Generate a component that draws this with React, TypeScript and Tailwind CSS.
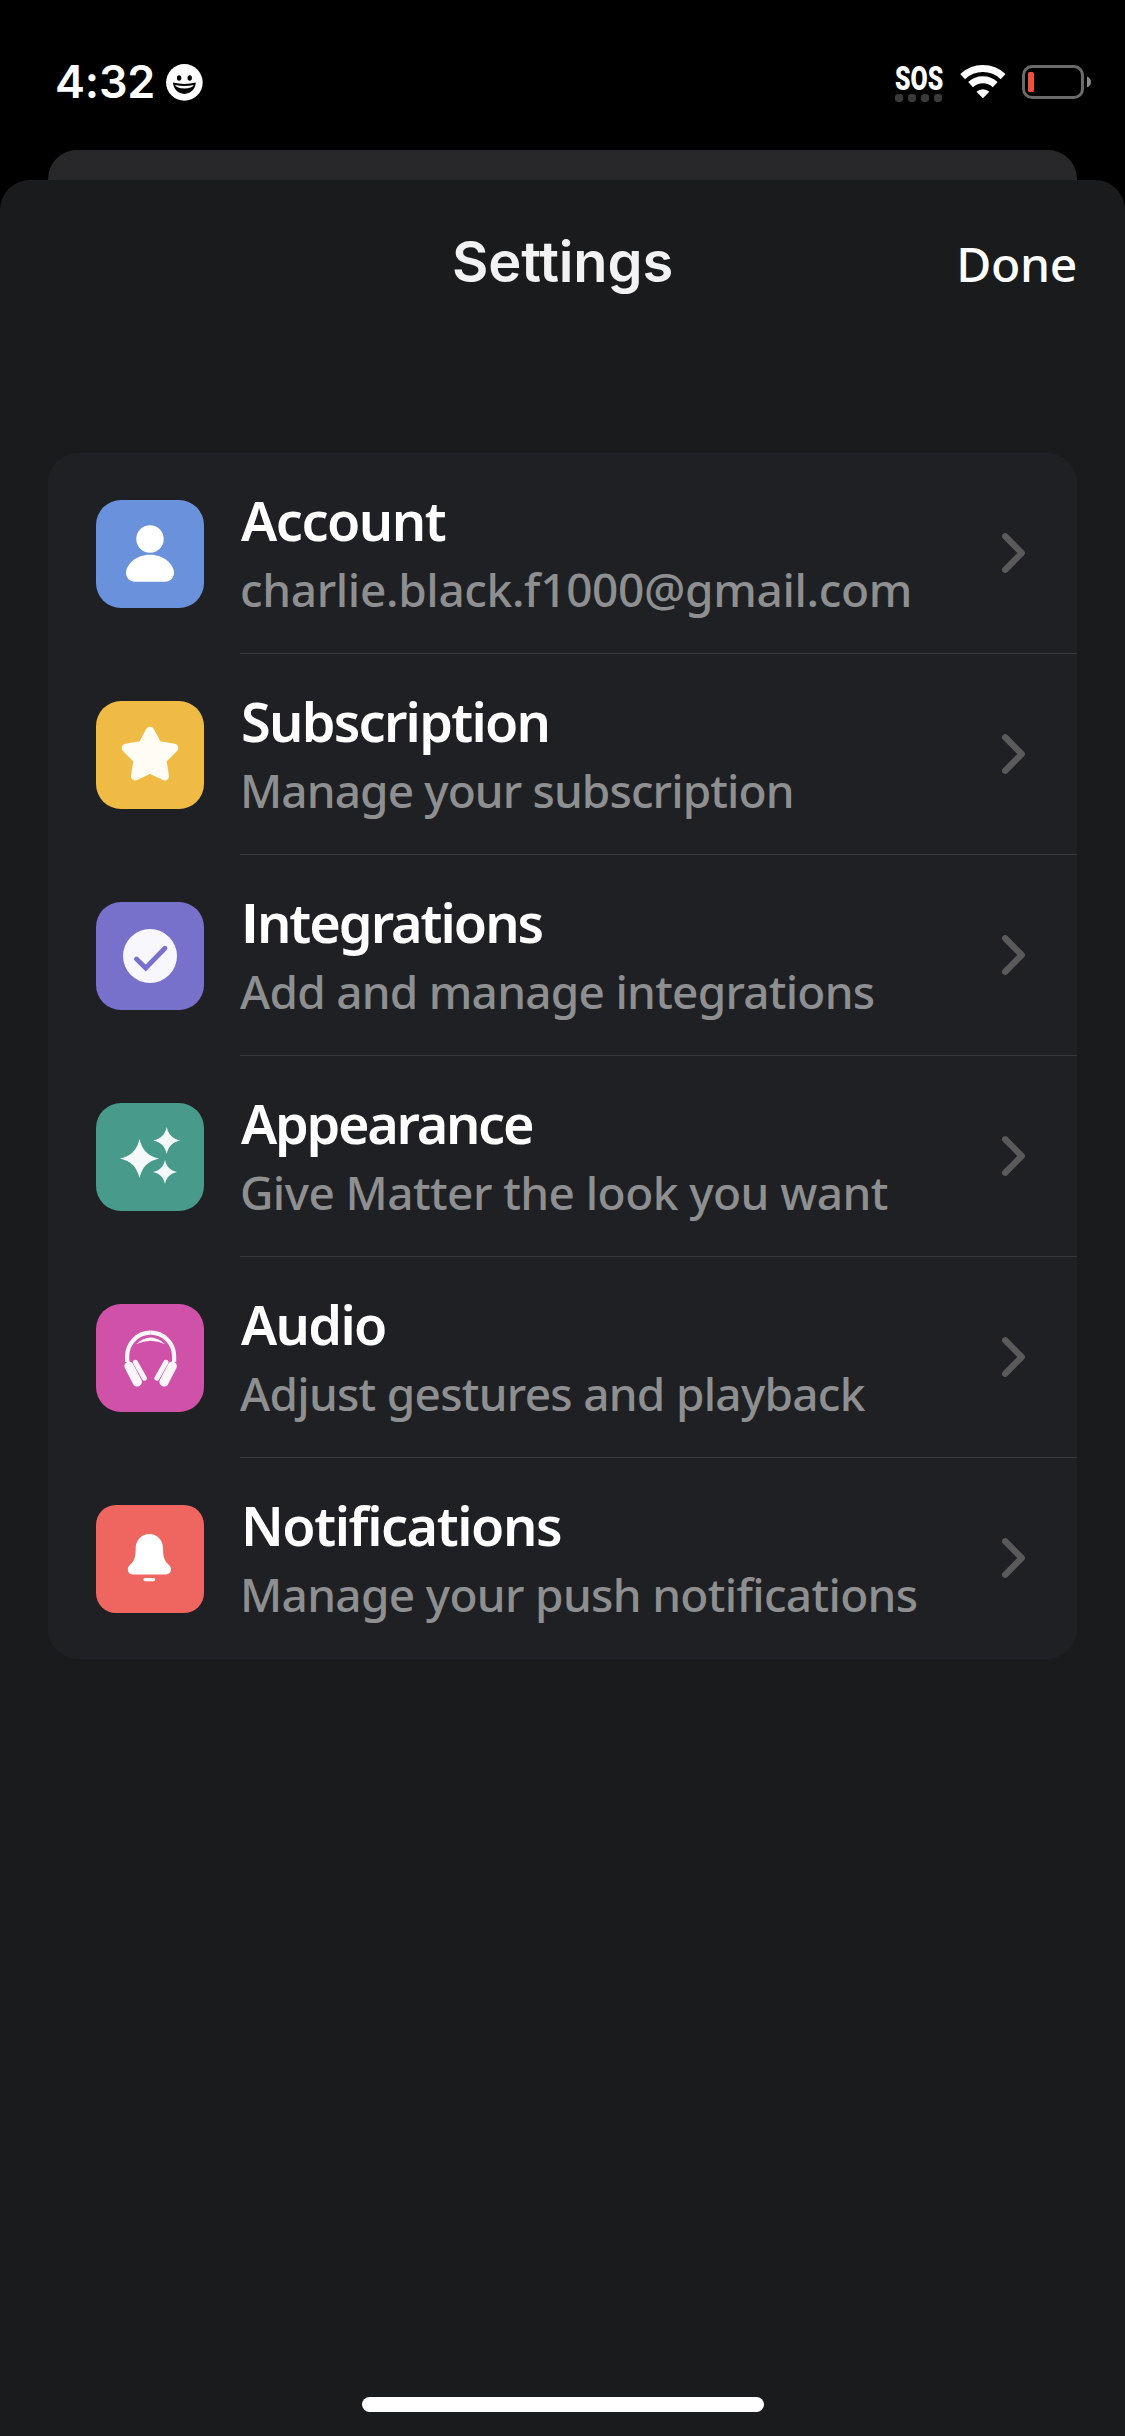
import React from 'react'

type Row = {
  title: string
  subtitle: string
  titleClass: string
  subtitleClass: string
  tile: string
  icon: React.ReactNode
}

const SPARKLE = 'M0 -1C.14 -.42 .42 -.14 1 0C.42 .14 .14 .42 0 1C-.14 .42 -.42 .14 -1 0C-.42 -.14 -.14 -.42 0 -1Z'

const EarCup = () => (
  <g stroke="#fcf5fa" strokeLinecap="round">
    <path d="M31.2 58V52A23.4 23.4 0 0 1 54.7 28.7" fill="none" strokeWidth="4.2" strokeLinecap="butt" />
    <path d="M33 62.2L41.3 78" strokeWidth="9.2" />
    <path d="M39.4 58.3L48.4 74.2" strokeWidth="5" />
  </g>
)

const rows: Row[] = [
  {
    title: 'Account',
    subtitle: 'charlie.black.f1000@gmail.com',
    titleClass: 'tracking-[-1.5px]',
    subtitleClass: 'tracking-[-0.35px]',
    tile: 'bg-[#6a92dc] rounded-[25px]',
    icon: (
      <g fill="#fff">
        <circle cx="54" cy="39" r="13.7" />
        <path d="M30 72.5C30.6 64 40 54.7 54 54.7S77.4 64 78 72.5C78 78 74 81.7 69 81.7H39C34 81.7 30 78 30 72.5Z" />
      </g>
    ),
  },
  {
    title: 'Subscription',
    subtitle: 'Manage your subscription',
    titleClass: 'tracking-[-1.75px]',
    subtitleClass: 'tracking-[-0.9px]',
    tile: 'bg-[#f0bb45] rounded-[25px]',
    icon: (
      <path
        d="M54 30L61.7 44.2L78 47L66.1 58.9L68.7 75.2L54 68.1L39.3 75.2L41.9 58.9L30 47L46.3 44.2Z"
        fill="#fffdf3"
        stroke="#fffdf3"
        strokeWidth="8.6"
        strokeLinejoin="round"
      />
    ),
  },
  {
    title: 'Integrations',
    subtitle: 'Add and manage integrations',
    titleClass: "tracking-[-2px] first-letter:font-['Open_Sans'] first-letter:font-bold",
    subtitleClass: 'tracking-[-0.75px]',
    tile: 'bg-[#7871cb] rounded-[25px]',
    icon: (
      <g>
        <circle cx="54" cy="54" r="27" fill="#f8f7fd" />
        <path d="M40.5 57L49.7 66L69 46.3" fill="none" stroke="#7871cb" strokeWidth="4.8" strokeLinecap="round" />
      </g>
    ),
  },
  {
    title: 'Appearance',
    subtitle: 'Give Matter the look you want',
    titleClass: 'tracking-[-2.3px]',
    subtitleClass: 'tracking-[-0.57px]',
    tile: 'bg-[#489a8a] rounded-[25px]',
    icon: (
      <g fill="#f4faf9">
        <path d={SPARKLE} transform="translate(43.5 55.5) scale(19.6)" />
        <path d={SPARKLE} transform="translate(70.7 37.4) scale(13.5)" />
        <path d={SPARKLE} transform="translate(69 69) scale(12)" />
      </g>
    ),
  },
  {
    title: 'Audio',
    subtitle: 'Adjust gestures and playback',
    titleClass: 'tracking-[-1.7px]',
    subtitleClass: 'tracking-[-0.73px]',
    tile: 'bg-[#d052a8] rounded-[25px]',
    icon: (
      <g>
        <EarCup />
        <g transform="translate(109.3 0) scale(-1 1)">
          <EarCup />
        </g>
        <path d="M40 40.2Q54.7 26.6 69.3 40.2Q54.7 33.2 40 40.2Z" fill="#fcf5fa" />
      </g>
    ),
  },
  {
    title: 'Notifications',
    subtitle: 'Manage your push notifications',
    titleClass: 'tracking-[-1.45px]',
    subtitleClass: 'tracking-[-0.68px]',
    tile: 'bg-[#ee665f] rounded-[20px]',
    icon: (
      <g fill="#fff">
        <path d="M39.7 43C39.7 35 46 29 53.4 29S67 35 67 43C67 52 68.5 56 72.5 59.5C74.2 61 75 62.5 75 64.5C75 67.4 73 69.4 70 69.4H36.7C33.7 69.4 31.8 67.4 31.8 64.5C31.8 62.5 32.6 61 34.3 59.5C38.3 56 39.7 52 39.7 43Z" />
        <rect x="47.4" y="73" width="11.8" height="3.2" rx="1.6" />
      </g>
    ),
  },
]

const StatusBar = () => (
  <div className="flex h-[150px] items-start justify-between pl-[55px] pr-[33px] pt-[62px]">
    <div className="flex items-center">
      <span className="w-[111px] font-[Inter] text-[45px] font-[570] leading-[40px] tracking-[-0.2px] whitespace-nowrap">4:32</span>
      <svg className="h-[37px] w-[37px]" viewBox="0 0 37 37">
        <circle cx="18.4" cy="18.4" r="18.3" fill="#fff" />
        <ellipse cx="13.1" cy="14" rx="2.2" ry="2.8" />
        <ellipse cx="23.7" cy="14" rx="2.2" ry="2.8" />
        <path d="M7 18.6Q18.4 21.5 29.8 18.6C29.4 25.5 24.5 29.9 18.4 29.9S7.4 25.5 7 18.6Z" />
        <path d="M9 20.9Q18.4 23.2 27.8 20.9Q26 24.3 18.4 24.5Q10.8 24.3 9 20.9Z" fill="#fff" />
      </svg>
    </div>
    <div className="flex items-start">
      <div className="w-[65px]">
        <div className="h-[32px]">
          <span className="inline-block origin-left scale-x-[0.73] font-[Roboto] text-[34px] font-black leading-[32px]">SOS</span>
        </div>
        <div className="flex gap-[5px]">
          {[0, 1, 2, 3].map((i) => (
            <span key={i} className="h-[8px] w-[8px] rounded-[3px] bg-[#3a3a3a]" />
          ))}
        </div>
      </div>
      <svg className="mt-[3px] h-[34px] w-[46px]" viewBox="0 0 46 34">
        <g fill="none" stroke="#fff" strokeWidth="7">
          <path d="M2.7 11.6A29.5 29.5 0 0 1 43.1 11.6" />
          <path d="M10.6 19.6A18 18 0 0 1 35.2 19.6" />
        </g>
        <path d="M22.9 33.2L16.5 26.8A9.2 9.2 0 0 1 29.3 26.8Z" fill="#fff" />
      </svg>
      <svg className="ml-[16px] mt-[3px] h-[34px] w-[70px]" viewBox="0 0 70 34">
        <rect x="1.5" y="1.5" width="59" height="31" rx="8.5" fill="none" stroke="#6a6a6a" strokeWidth="3" />
        <rect x="6" y="7" width="6" height="20" rx="1.5" fill="#ed5140" />
        <path d="M65 11.5Q69 13.5 69 17T65 22.5Z" fill="#8a8a8a" />
      </svg>
    </div>
  </div>
)

const SettingsRow = ({ row, last }: { row: Row; last: boolean }) => (
  <div className="flex h-[201px] pl-12">
    <div className={`mt-[47px] h-[108px] w-[108px] shrink-0 ${row.tile}`}>
      <svg className="h-full w-full" viewBox="0 0 108 108">
        {row.icon}
      </svg>
    </div>
    <div className={`ml-9 flex flex-1 justify-between pr-[51px] ${last ? '' : 'border-b border-[#38393b]'}`}>
      <div className="pt-[33px] whitespace-nowrap">
        <div className={`h-[69px] pl-px text-[54px] font-semibold leading-[68px] text-white ${row.titleClass}`}>{row.title}</div>
        <div className={`text-[46px] font-medium leading-[68px] text-[#8e8f90] ${row.subtitleClass}`}>{row.subtitle}</div>
      </div>
      <svg className="mt-[79px] h-[42px] w-[26px]" viewBox="0 0 26 42">
        <path d="M5.2 4.3L21.7 21L5.2 37.7" fill="none" stroke="#5a5a5b" strokeWidth="6.4" strokeLinecap="round" strokeLinejoin="round" />
      </svg>
    </div>
  </div>
)

const App = () => {
  return (
    <main className="flex h-[2436px] w-[1125px] flex-col overflow-hidden bg-black font-['Noto_Sans',sans-serif] text-white">
      <StatusBar />
      <div className="mx-12 h-[30px] shrink-0 rounded-t-[29px] bg-[#28282a]" />
      <section className="flex flex-1 flex-col rounded-t-[30px] bg-[#1a1b1c]">
        <header className="grid h-[273px] grid-cols-3 items-start px-12 pt-[47px] leading-[70px]">
          <h1 className="col-start-2 text-center font-[Inter] text-[56px] font-[560] tracking-[-0.1px] text-[#f2f2f2] [font-feature-settings:'calt'_0]">Settings</h1>
          <button className="justify-self-end text-[48px] font-medium leading-[74px] tracking-[-0.3px]">Done</button>
        </header>
        <div className="mx-12 rounded-[30px] bg-[#1f2023]">
          {rows.map((row, i) => (
            <SettingsRow key={row.title} row={row} last={i === rows.length - 1} />
          ))}
        </div>
        <div className="mx-auto mb-6 mt-auto h-[15px] w-[402px] rounded-full bg-white" />
      </section>
    </main>
  )
}

export default App
